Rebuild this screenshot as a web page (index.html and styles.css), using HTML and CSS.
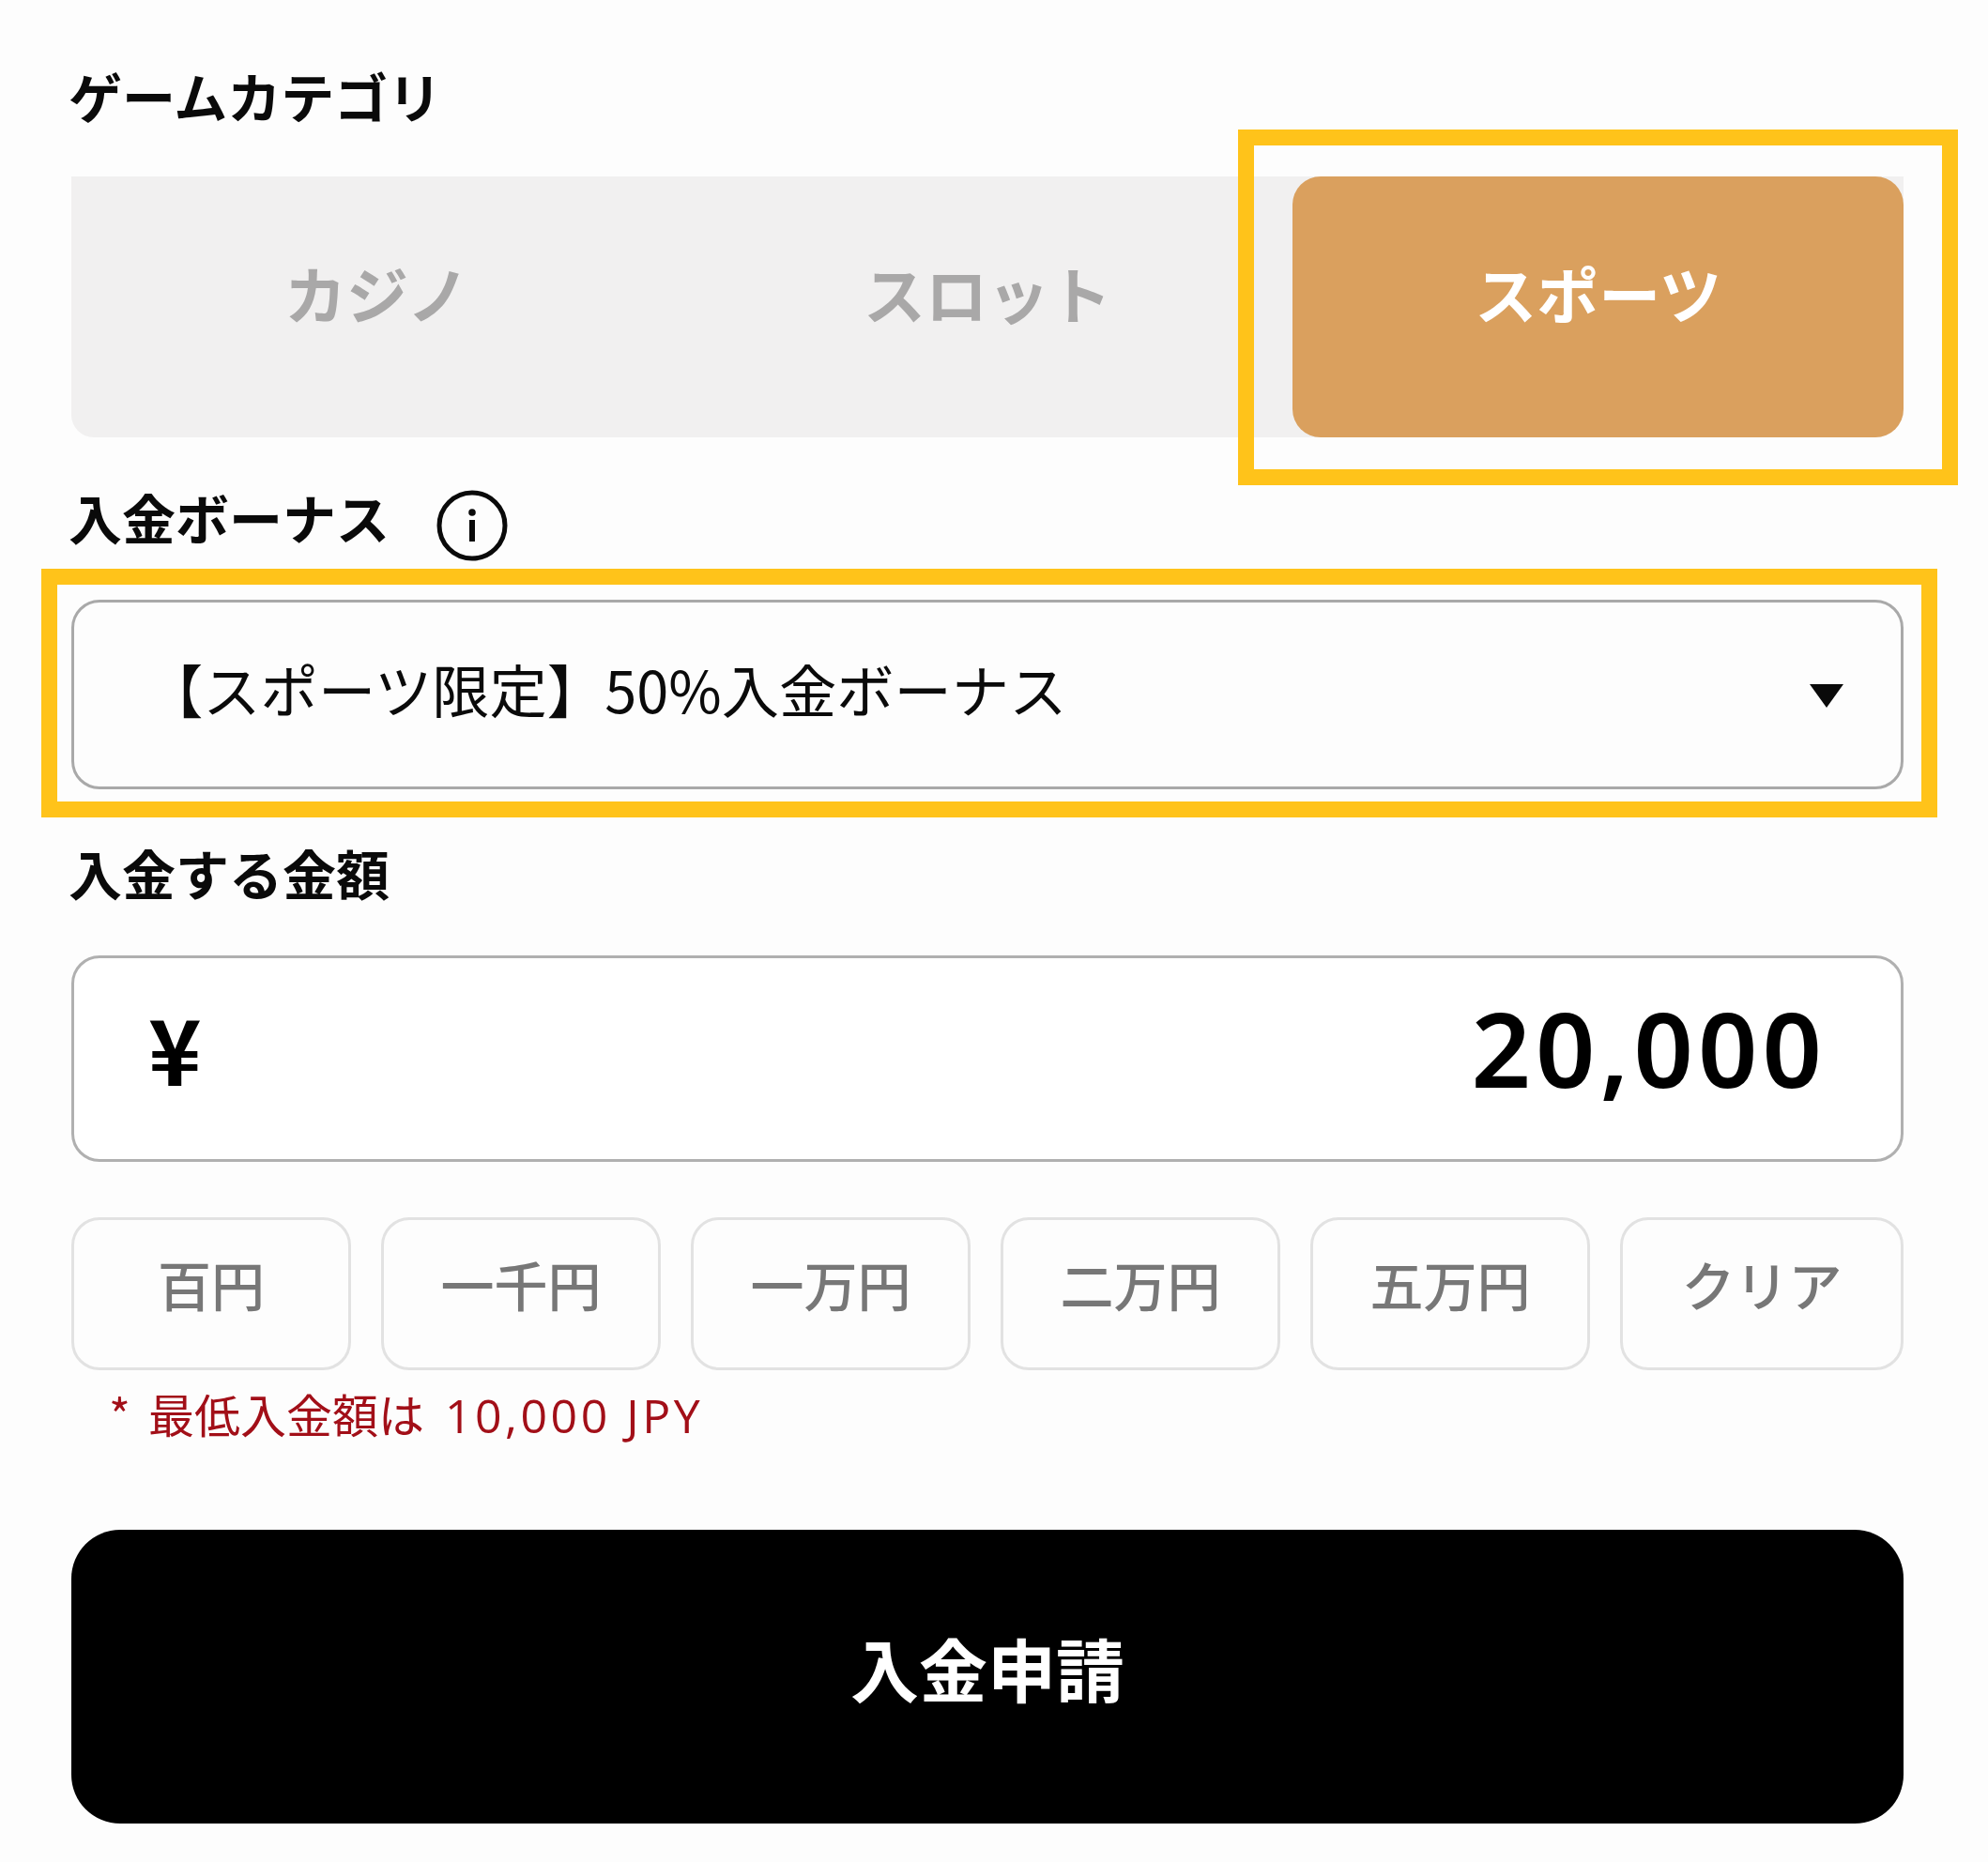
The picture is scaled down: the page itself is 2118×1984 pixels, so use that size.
FILE: index.html
```html
<!DOCTYPE html>
<html lang="ja">
<head>
<meta charset="utf-8">
<title>入金</title>
<link rel="stylesheet" href="styles.css">
</head>
<body>
<main class="form">
  <h2 class="label label-first">ゲームカテゴリ</h2>
  <div class="tabs">
    <div class="tab">カジノ</div>
    <div class="tab">スロット</div>
    <div class="tab tab-active">スポーツ<span class="mark mark-tab"></span></div>
  </div>

  <h2 class="label label-info">入金ボーナス
    <svg class="info" viewBox="0 0 76 76" aria-hidden="true">
      <circle cx="38" cy="38" r="35" fill="none" stroke="#0a0a0a" stroke-width="5"/>
      <circle cx="38" cy="24" r="3.8" fill="#0a0a0a"/>
      <rect x="35" y="32" width="6" height="23" fill="#0a0a0a"/>
    </svg>
  </h2>
  <div class="select">
    <span class="select-text">【スポーツ限定】50%入金ボーナス</span>
    <svg class="caret" viewBox="0 0 36 25" aria-hidden="true"><path d="M0 0H36L18 25Z" fill="#0a0a0a"/></svg>
    <span class="mark mark-select"></span>
  </div>

  <h2 class="label">入金する金額</h2>
  <div class="amount">
    <span class="yen">¥</span>
    <span class="value">20,000</span>
  </div>

  <div class="chips">
    <button class="chip">百円</button>
    <button class="chip">一千円</button>
    <button class="chip">一万円</button>
    <button class="chip">二万円</button>
    <button class="chip">五万円</button>
    <button class="chip">クリア</button>
  </div>
  <p class="note"><span class="note-star">*</span>最低入金額は<span class="note-num">10,000 JPY</span></p>

  <button class="submit">入金申請</button>
</main>
</body>
</html>
```

FILE: styles.css
```css
* { box-sizing: border-box; }

html, body { margin: 0; padding: 0; }

body {
  background: #fdfdfd;
  color: #0a0a0a;
  font-family: "Noto Sans CJK JP", "Noto Sans", sans-serif;
  width: 2118px;
  height: 1984px;
  overflow: hidden;
}

.form {
  padding: 64px 90px 0 76px;
}

.label {
  margin: 51px 0 46px -3px;
  height: 80px;
  font-size: 57px;
  font-weight: 700;
  line-height: 74px;
}

.label-first { margin: 0 0 44px -3px; }

.label-info {
  display: flex;
  align-items: flex-start;
  margin: 47px 0 46px -3px;
}

.info {
  width: 76px;
  height: 76px;
  margin: 9px 0 0 50px;
}

.tabs {
  display: grid;
  grid-template-columns: repeat(3, 1fr);
  height: 278px;
  background: #f1f0f0;
  border-radius: 0 0 30px 24px;
}

.tab {
  display: flex;
  align-items: center;
  justify-content: center;
  padding-bottom: 32px;
  font-size: 66px;
  font-weight: 700;
  color: #a9a8a8;
}

.tab-active {
  position: relative;
  background: #daa05e;
  border-radius: 30px;
  color: #fff;
}

.mark {
  position: absolute;
  border: 17px solid #ffc31a;
  pointer-events: none;
}

.mark-tab { inset: -50px -58px -51px -58px; }
.mark-select { inset: -36px -39px -33px -35px; }

.select {
  position: relative;
  display: flex;
  align-items: center;
  justify-content: space-between;
  height: 202px;
  padding: 0 61px 12px 76px;
  border: 3px solid #a9a9a9;
  border-radius: 30px;
  background: #fdfdfd;
}

.select-text {
  font-size: 61.3px;
  line-height: 1;
  color: #0a0a0a;
}

.caret {
  width: 36px;
  height: 25px;
  margin-top: 15px;
}

.amount {
  display: flex;
  align-items: center;
  justify-content: space-between;
  height: 220px;
  padding: 0 79px 24px 79px;
  border: 3px solid #b0b0b0;
  border-radius: 30px;
  background: #fff;
  font-weight: 700;
  color: #000;
}

.yen { font-size: 96px; line-height: 1; }

.value {
  font-family: "Noto Sans", sans-serif;
  font-size: 111px;
  font-weight: 600;
  letter-spacing: 5px;
  line-height: 1;
}

.chips {
  display: grid;
  grid-template-columns: repeat(5, 298px) 302px;
  column-gap: 32px;
  margin-top: 59px;
}

.chip {
  height: 163px;
  padding: 0 0 22px;
  border: 3px solid #e2e2e2;
  border-radius: 30px;
  background: #fdfdfd;
  color: #777;
  font-family: inherit;
  font-size: 57px;
  font-weight: 500;
  line-height: 1;
}

.note {
  margin: 15px 0 0;
  padding-left: 40px;
  height: 70px;
  font-size: 49px;
  line-height: 62px;
  color: #a20f18;
}

.note-star { margin-right: 19px; }

.note-num {
  margin-left: 22px;
  font-family: "Open Sans", sans-serif;
  font-size: 50px;
  letter-spacing: 3.5px;
}

.submit {
  display: block;
  width: 100%;
  height: 313px;
  margin-top: 85px;
  padding: 0 0 20px;
  border: 0;
  border-radius: 52px;
  background: #000;
  color: #fff;
  font-family: inherit;
  font-size: 73px;
  font-weight: 700;
  line-height: 1;
}
```
